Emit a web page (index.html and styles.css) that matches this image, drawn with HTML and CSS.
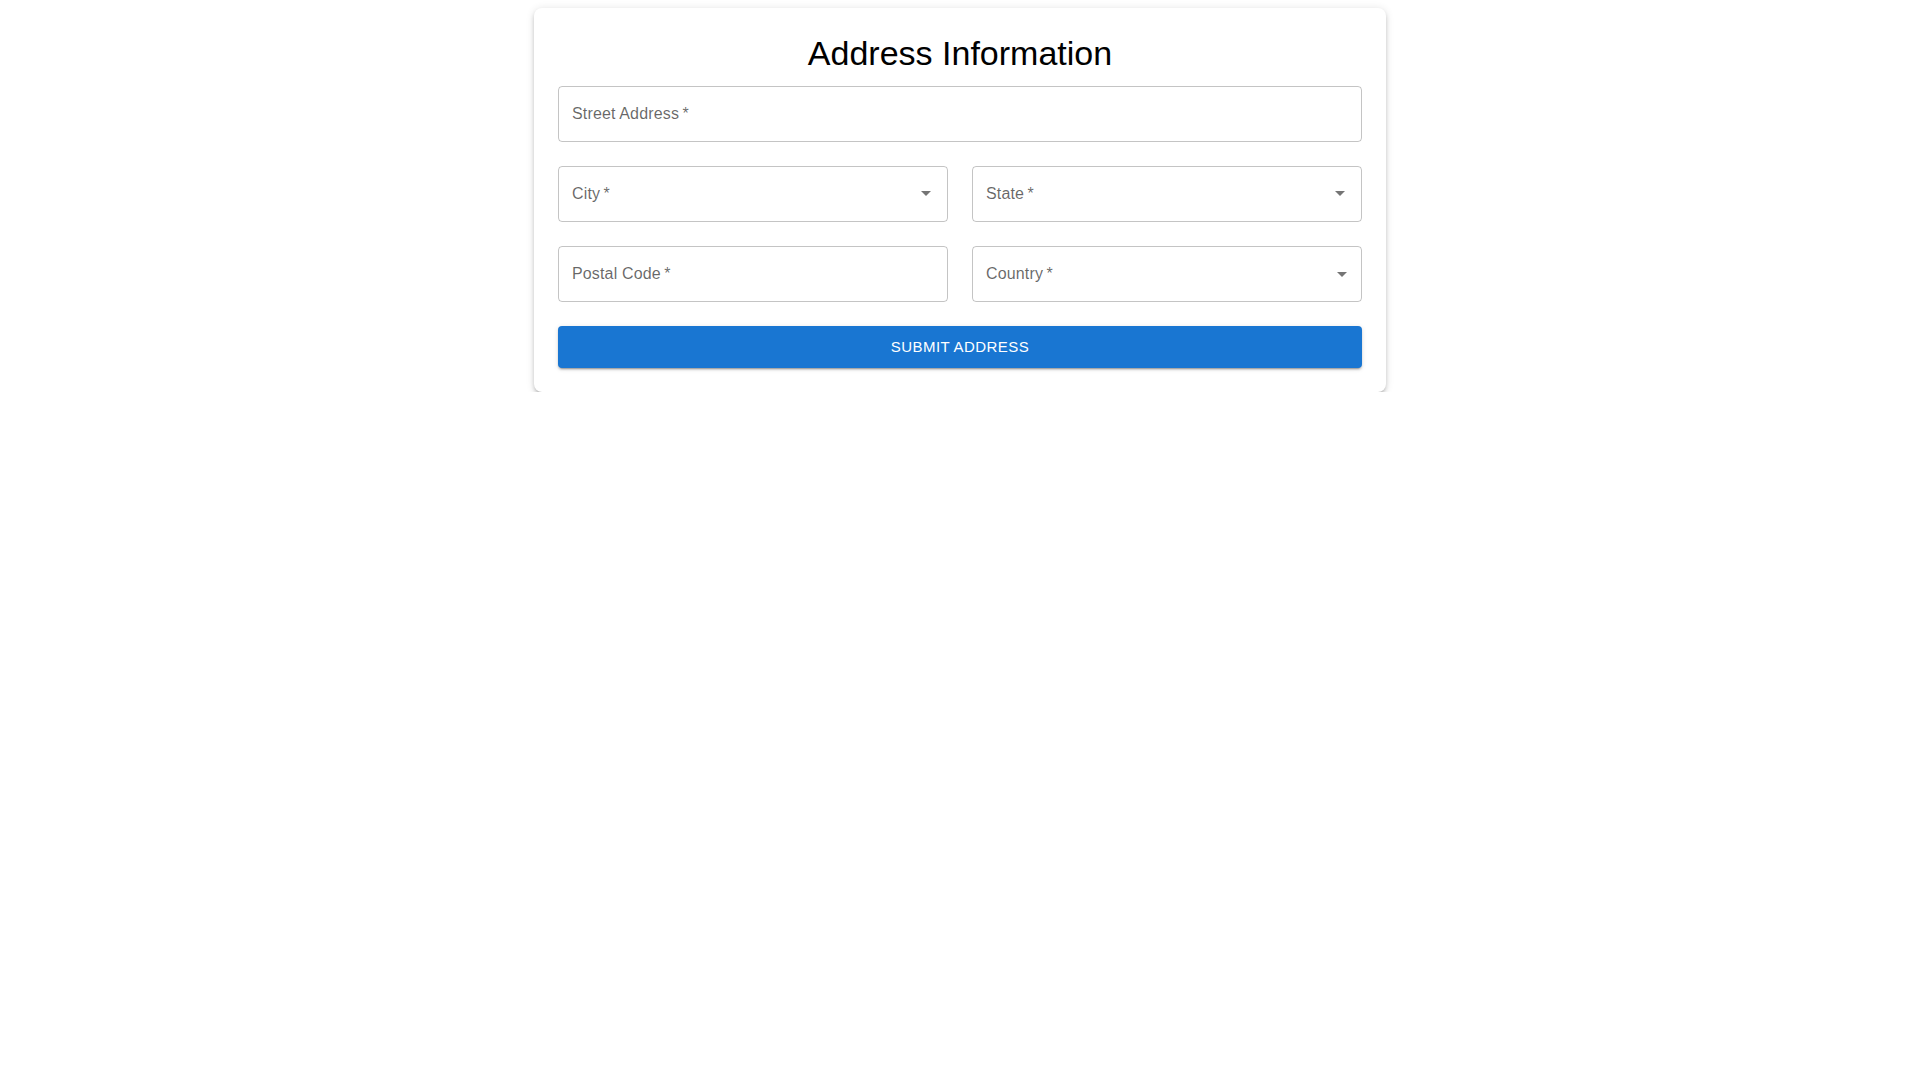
FILE: index.html
```html
<!DOCTYPE html>
<html lang="en">
<head>
<meta charset="utf-8">
<title>Address Information</title>
<link rel="stylesheet" href="styles.css">
</head>
<body>
<main class="container">
  <section class="card">
    <h1 class="title">Address Information</h1>
    <form class="grid">
      <div class="field span-2"><span class="label">Street Address<span class="req">&thinsp;*</span></span></div>
      <div class="field select"><span class="label">City<span class="req">&thinsp;*</span></span><svg class="arrow" viewBox="0 0 24 24" width="24" height="24"><path d="M7 10l5 5 5-5z"/></svg></div>
      <div class="field select"><span class="label">State<span class="req">&thinsp;*</span></span><svg class="arrow" viewBox="0 0 24 24" width="24" height="24"><path d="M7 10l5 5 5-5z"/></svg></div>
      <div class="field"><span class="label">Postal Code<span class="req">&thinsp;*</span></span></div>
      <div class="field select"><span class="label">Country<span class="req">&thinsp;*</span></span><svg class="arrow arrow-native" viewBox="0 0 24 24" width="24" height="24"><path d="M7 10l5 5 5-5z"/></svg></div>
      <button type="button" class="submit span-2">Submit Address</button>
    </form>
  </section>
</main>
</body>
</html>
```

FILE: styles.css
```css
* { box-sizing: border-box; }
html, body { margin: 0; padding: 0; background: #fff; }
body {
  font-family: "Liberation Sans", Arial, Helvetica, sans-serif;
  color: #000;
}
.container {
  max-width: 900px;
  margin: 8px auto 0;
  padding: 0 24px;
}
.card {
  background: #fff;
  border-radius: 8px;
  padding: 24px;
  box-shadow: 0px 3px 3px -2px rgba(0,0,0,0.2), 0px 3px 4px 0px rgba(0,0,0,0.14), 0px 1px 8px 0px rgba(0,0,0,0.12);
}
.title {
  margin: 0 0 12px;
  font-size: 34px;
  font-weight: 400;
  line-height: 42px;
  text-align: center;
  color: #000;
}
.grid {
  display: grid;
  grid-template-columns: 1fr 1fr;
  gap: 24px;
  margin: 0;
}
.span-2 { grid-column: span 2; }
.field {
  position: relative;
  height: 56px;
  border: 1px solid rgba(0,0,0,0.23);
  border-radius: 4px;
  display: flex;
  align-items: center;
  padding: 0 13px;
  padding-bottom: 1px;
}
.label {
  font-size: 16px;
  line-height: 23px;
  color: rgba(0,0,0,0.6);
  letter-spacing: 0.00938em;
}
.arrow {
  position: absolute;
  right: 9px;
  top: 50%;
  margin-top: -13px;
  fill: rgba(0,0,0,0.54);
}
.arrow-native { right: 7px; margin-top: -12px; }
.submit {
  height: 42px;
  margin-top: 0;
  border: 0;
  border-radius: 4px;
  background: #1976d2;
  color: #fff;
  font-family: "Liberation Sans", Arial, Helvetica, sans-serif;
  font-size: 15px;
  font-weight: 500;
  letter-spacing: 0.02857em;
  text-transform: uppercase;
  line-height: 26px;
  padding: 8px 22px;
  box-shadow: 0px 3px 1px -2px rgba(0,0,0,0.2), 0px 2px 2px 0px rgba(0,0,0,0.14), 0px 1px 5px 0px rgba(0,0,0,0.12);
  cursor: pointer;
}
```
